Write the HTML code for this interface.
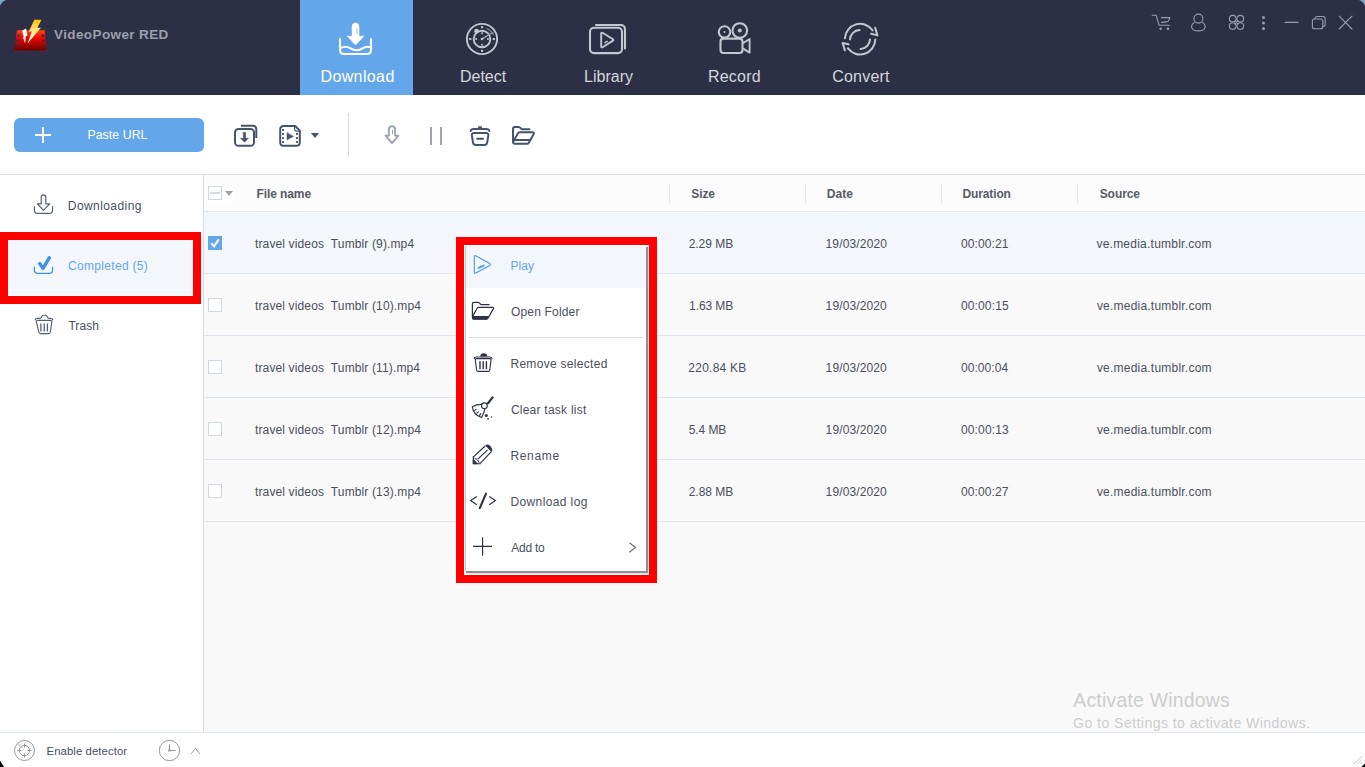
<!DOCTYPE html>
<html>
<head>
<meta charset="utf-8">
<title>VideoPower RED</title>
<style>
*{box-sizing:border-box;margin:0;padding:0}
html,body{width:1365px;height:767px;overflow:hidden;background:#fff;font-family:"Liberation Sans",sans-serif;}
.abs{position:absolute}
#app{position:absolute;left:0;top:0;width:1365px;height:767px;overflow:hidden;background:#fff}
#hdr{position:absolute;left:0;top:0;width:1365px;height:95px;background:#2d3045}
.tab{position:absolute;top:0;width:113px;height:95px;color:#d3d6dc;font-size:16.5px;text-align:center}
.tab .lbl{position:absolute;left:0;width:113px;top:66px;line-height:20px;white-space:nowrap}
.tab.on{background:#63a7ea;color:#fff}
#title{position:absolute;left:54px;top:26px;font-size:14px;font-weight:bold;color:#c6c7cc;line-height:18px;white-space:nowrap}
#tool{position:absolute;left:0;top:95px;width:1365px;height:80px;background:#fff;border-bottom:1px solid #d9e0e8}
#paste{position:absolute;left:14px;top:23px;width:190px;height:34px;background:#63a7ea;border-radius:6px;color:#fff;font-size:13px}
#side{position:absolute;left:0;top:175px;width:204px;height:557px;background:#fff;border-right:1px solid #d5dde6}
.sitem{position:absolute;left:0;width:203px;height:60px;font-size:12.5px;color:#46505f}
.sitem span{position:absolute;left:68px;top:22px;line-height:16px;white-space:nowrap}
#main{position:absolute;left:204px;top:175px;width:1161px;height:557px;background:#f9f9fa}
#thead{position:absolute;left:0;top:0;width:1161px;height:37px;background:#fcfcfc;border-bottom:1px solid #e0e6ed;font-size:12px;font-weight:bold;color:#474c58}
#thead span{position:absolute;top:11px;line-height:15px;white-space:nowrap}
#thead i{position:absolute;top:9px;width:1px;height:19px;background:#e3e6ea}
.row{position:absolute;left:0;width:1161px;height:62px;border-bottom:1px solid #e0e6ed;font-size:12px;color:#4a4f5c;background:#f9f9fa}
.row.sel{background:#f3f6fa}
.row span{position:absolute;top:24px;line-height:15px;white-space:pre}
.cb{position:absolute;left:4px;top:24px;width:14px;height:14px;border:1px solid #cfd7e2;background:#fff}
.cb.on{background:#63a7ea;border-color:#63a7ea}
#foot{position:absolute;left:0;top:732px;width:1365px;height:35px;background:#fff;border-top:1px solid #dfe5ec;font-size:12px;color:#46505f}
#menu{position:absolute;left:464px;top:245px;width:182px;height:326px;background:#fff;box-shadow:2px 2px 0 #8f8f8f,3px 3px 0 #d9e6e6;font-size:12px;color:#4a4f5c}
#menu .lb{position:absolute;left:1px;top:1px;width:1px;height:325px;background:#c9c9c9}
.mi{position:absolute;left:2px;width:180px;height:46px}
.mi span{position:absolute;left:45px;top:15px;line-height:16px;white-space:nowrap}
.red{position:absolute;border:8px solid #fe0000}
#tx span{position:absolute;white-space:pre;line-height:1}
</style>
</head>
<body>
<div id="app">
<div id="hdr">
    <div class="tab on" style="left:300px"></div>
  <div class="tab" style="left:426px"></div>
  <div class="tab" style="left:552px"></div>
  <div class="tab" style="left:678px"></div>
  <div class="tab" style="left:804px"></div>
</div>
<svg id="ico" width="1365" height="767" viewBox="0 0 1365 767" style="position:absolute;left:0;top:0;pointer-events:none" fill="none" stroke-linecap="round" stroke-linejoin="round">
<defs>
<linearGradient id="gRed" x1="0" y1="0" x2="0" y2="1"><stop offset="0" stop-color="#ff4a1a"/><stop offset=".35" stop-color="#f00800"/><stop offset="1" stop-color="#6e0000"/></linearGradient>
<linearGradient id="gBolt" x1="0" y1="0" x2="0" y2="1"><stop offset="0" stop-color="#ffc400"/><stop offset=".45" stop-color="#ffe680"/><stop offset="1" stop-color="#ffffff"/></linearGradient>
</defs>
<g stroke="none">
<path d="M16.9 30.2 L44.7 30.2 L46.9 50.4 L14.3 50.4 Z" fill="url(#gRed)"/>
<g fill="#2d3045"><rect x="17.2" y="34.6" width="2.6" height="2.1" rx=".7"/><rect x="16.7" y="39.5" width="2.6" height="2.1" rx=".7"/><rect x="16.2" y="44.4" width="2.6" height="2.1" rx=".7"/><rect x="41.8" y="34.6" width="2.6" height="2.1" rx=".7"/><rect x="42.3" y="39.5" width="2.6" height="2.1" rx=".7"/><rect x="42.8" y="44.4" width="2.6" height="2.1" rx=".7"/>
<path d="M14 32.6 h2.6 v1.3 h-2.6z M14 37.6 h2.4 v1.3 h-2.4z M13.8 42.6 h2 v1.3 h-2z M13.6 47.4 h1.6 v1.2 h-1.6z M45.2 32.6 h2.6 v1.3 h-2.6z M45.6 37.6 h2.4 v1.3 h-2.4z M46 42.6 h2 v1.3 h-2z M46.4 47.4 h1.6 v1.2 h-1.6z"/></g>
<path d="M16.6 29.2 h1.4 v1.4 h-1.4z M43.6 29.2 h1.4 v1.4 h-1.4z M14.2 50 h2.4 v1 h-2.4z M44.6 50 h2.4 v1 h-2.4z" fill="#a01008"/>
<path d="M34.3 19.8 L41.5 19.8 L37.3 27.7 L41 27.7 L27.7 43.2 L31.8 31.4 L28.9 31.4 Z" fill="url(#gBolt)"/>
<path d="M26 28.4 L22.1 30.8 L23.8 36.9 L22.9 37.3 L25.2 43.6 L25.7 36.5 L27.5 35.5 Z" fill="#fff"/>
</g>
<g stroke="#fff" stroke-width="2.1">
<path d="M340 39 V50 Q340 54 344 54 H367 Q371 54 371 50 V39"/>
<path d="M340.5 48.3 C344 46 347.5 46.6 350.5 48.4 S358 51.2 362 48.6 S368 46 371 47.6" stroke-width="1.9"/>
</g>
<path d="M352 26.4 A3.5 3.5 0 0 1 359 26.4 V36.2 H364 L355.5 45 L347.2 36.2 H352 Z" fill="#fff" stroke="#fff" stroke-width=".6"/>
<rect x="356.1" y="28.2" width="1.8" height="5.6" fill="#c3dcf6"/>
<g stroke="#c3c7cf" stroke-width="1.9">
<circle cx="482" cy="39" r="15.1"/><circle cx="482" cy="39" r="8.3"/>
<path d="M482.6 38.6 L488.5 35" stroke="#a9aebb" stroke-width="1.3"/>
<path d="M487 28.5 Q491.5 30.5 493.2 34.5" stroke="#7d8392" stroke-width="1.3"/>
<path d="M488.6 35 L493 32.6" stroke="#8b91a0" stroke-width="1.4"/>
</g>
<g fill="#c3c7cf"><rect x="481" y="26.2" width="2.1" height="2.1"/><rect x="481" y="49.8" width="2.1" height="2.1"/><rect x="469.2" y="38" width="2.1" height="2.1"/><rect x="492.8" y="38" width="2.1" height="2.1"/>
<rect x="481.2" y="32.4" width="1.7" height="1.8"/><rect x="481.2" y="43.9" width="1.7" height="1.8"/><rect x="475.3" y="38.2" width="1.8" height="1.7"/><rect x="487" y="38.2" width="1.8" height="1.7"/>
<circle cx="482" cy="39" r="1.3"/><circle cx="476.6" cy="31.2" r="2.4"/></g>
<g stroke="#c3c7cf" stroke-width="2.1">
<rect x="590" y="27.8" width="32" height="25.3" rx="4"/>
<path d="M596 25 H620.5 Q625 25 625 29.5 V48.5"/>
<path d="M601.2 33.6 V46.6 Q601.4 47.8 602.6 47.2 L613 40.6 Q613.8 40 613 39.3 L602.6 32.8 Q601.3 32.4 601.2 33.6 Z" stroke-width="1.9"/>
<path d="M605 42.6 L607.2 41.4" stroke-width="1.5"/>
</g>
<g stroke="#c3c7cf" stroke-width="2.1">
<circle cx="724.5" cy="31.9" r="5.7"/><circle cx="739.8" cy="30.5" r="7.3"/>
<rect x="720.5" y="38.6" width="22" height="14.4" rx="3"/>
<path d="M743.6 42.8 L749.6 39 V52.6 L743.6 48.9" stroke-width="1.9"/>
</g>
<g fill="#c3c7cf"><circle cx="724.5" cy="31.9" r="1"/><circle cx="739.8" cy="30.5" r="2"/></g>
<g stroke="#c3c7cf" stroke-width="2">
<path d="M844.9 38.2 A15.2 15.2 0 0 1 872.6 30.4"/>
<path d="M871.2 33.8 L877.4 35.4 L875.2 27.8"/>
<path d="M875.3 39.6 A15.2 15.2 0 0 1 847.8 48.2"/>
<path d="M848.6 44.2 L842.6 43 L844.9 50.4"/>
<path d="M850 39.4 A10 10 0 0 1 859.6 30"/>
<path d="M870 39.4 A10 10 0 0 1 860.6 49"/>
</g>
<g stroke="#9a9daa" stroke-width="1.1">
<path d="M1152.2 15.3 H1156.2 L1159 25.2 H1169.4"/>
<path d="M1161.4 17.6 H1169.6 Q1170 17.7 1169.6 18.6 L1168.4 21 Q1168 21.8 1166.8 21.9 L1161.6 22.4"/>
<circle cx="1198.4" cy="18.6" r="4.5"/>
<path d="M1194.2 22.6 C1190 25.6 1190.6 30.9 1198.4 30.9 S1206.8 25.6 1202.6 22.6"/>
<circle cx="1232.7" cy="18.7" r="3.3"/><circle cx="1240.3" cy="18.7" r="3.3"/><circle cx="1232.7" cy="26.1" r="3.3"/><circle cx="1240.3" cy="26.1" r="3.3"/>
<path d="M1234.9 20.9 L1238.1 23.9 M1238.1 20.9 L1234.9 23.9"/>
<path d="M1285 22.4 H1298"/>
<rect x="1312.4" y="19" width="10.4" height="9.8" rx="2"/>
<path d="M1314.8 18.6 Q1315 16.5 1317 16.5 H1323 Q1325.2 16.5 1325.2 18.6 V24.2 Q1325.2 26.4 1323.2 26.4"/>
<path d="M1339.2 16.2 L1352 29 M1352 16.2 L1339.2 29"/>
</g>
<g fill="#9a9daa"><circle cx="1160.6" cy="28.8" r="1.3"/><circle cx="1167.9" cy="28.8" r="1.3"/><circle cx="1263.5" cy="17.5" r="1.5"/><circle cx="1263.5" cy="23" r="1.5"/><circle cx="1263.5" cy="28.5" r="1.5"/></g>
</svg>

<div id="tool">
  <div id="paste"></div>
</div>
<div id="side">
  <div class="sitem" style="top:0"></div>
  <div class="sitem" style="top:60px;background:#f3f6fa;color:#63a7ea"></div>
  <div class="sitem" style="top:120px"></div>
</div>
<div id="main">
  <div id="thead">
    <div class="abs" style="left:2px;top:10px;width:28px;height:16px;background:#fff"></div>
    <div class="cb" style="top:11px"><div class="abs" style="left:1px;top:5px;width:10px;height:2px;background:#d3dae4"></div></div>
    <div class="abs" style="left:21px;top:16px;width:0;height:0;border-left:4px solid transparent;border-right:4px solid transparent;border-top:5px solid #9a9fa8"></div>
    <i style="left:465px"></i>
    <i style="left:601px"></i>
    <i style="left:737px"></i>
    <i style="left:873px"></i>
    
  </div>
  <div class="row sel" style="top:37px"><div class="cb on"><svg class="abs" style="left:-1px;top:-1px" width="14" height="14" viewBox="0 0 14 14"><path d="M3.2 7.2 L6 10.4 L10.8 3.4" fill="none" stroke="#fff" stroke-width="2"/></svg></div></div>
  <div class="row" style="top:99px"><div class="cb"></div></div>
  <div class="row" style="top:161px"><div class="cb"></div></div>
  <div class="row" style="top:223px"><div class="cb"></div></div>
  <div class="row" style="top:285px"><div class="cb"></div></div>
</div>
<div id="foot"></div>
<svg id="ico2" width="1365" height="767" viewBox="0 0 1365 767" style="position:absolute;left:0;top:0;pointer-events:none" fill="none" stroke-linecap="round" stroke-linejoin="round">
<path d="M35 135 H51 M43 127 V143" stroke="#fff" stroke-width="2" stroke-linecap="butt"/>
<g stroke="#43546b" stroke-width="2">
<rect x="235" y="129" width="19" height="16.8" rx="3.6"/>
<path d="M241 125.8 H252.8 Q256.3 125.8 256.3 129.4 V138" stroke-linecap="butt"/>
</g>
<path d="M243.3 132.4 H245.7 V138.2 H248.6 L244.5 142.2 L240.5 138.2 H243.3 Z" fill="#43546b" stroke="#43546b" stroke-width=".5"/>
<g stroke="#43546b" stroke-width="2">
<path d="M283.8 126 H295.2 L299.8 130.6 V142.2 Q299.8 145.8 296.2 145.8 H283.8 Q280.2 145.8 280.2 142.2 V129.6 Q280.2 126 283.8 126 Z"/>
<path d="M294.6 126.6 V129.4 Q294.8 131.2 296.6 131.2 H299.2" stroke-width="1.2"/>
</g>
<g fill="#43546b"><rect x="282.1" y="129" width="1.9" height="1.9"/><rect x="282.1" y="133" width="1.9" height="1.9"/><rect x="282.1" y="137.1" width="1.9" height="1.9"/><rect x="282.1" y="141.1" width="1.9" height="1.9"/>
<rect x="296" y="133" width="1.9" height="1.9"/><rect x="296" y="137.1" width="1.9" height="1.9"/><rect x="296" y="141.1" width="1.9" height="1.9"/>
<path d="M287 133 V139.8 L293.2 136.4 Z" stroke="#43546b" stroke-width=".6"/>
<path d="M310.9 133 H319 L315 137.9 Z"/></g>
<rect x="348" y="113" width="1" height="44" fill="#d3dbe5"/>
<g stroke="#9ba4b1" stroke-width="1.9">
<path d="M388.9 135.6 V129.4 A3.1 3.1 0 0 1 395.1 129.4 V135.6 H398.4 L392 143.2 L385.6 135.6 Z"/>
<path d="M392.5 130.2 V134" stroke-width="1"/>
</g>
<g fill="#9ba4b1"><rect x="430" y="127" width="2" height="18"/><rect x="440" y="127" width="2" height="18"/></g>
<g stroke="#43546b" stroke-width="2">
<path d="M470.6 131 Q471.2 128.9 473.6 128.9 H486.4 Q488.8 128.9 489.4 131"/>
<path d="M479.2 127.4 H480.8" stroke-width="2.4"/>
<path d="M474 133 H486.2 Q488.6 133 488.3 135.4 L487.2 142.6 Q486.8 144.9 484.4 144.9 H475.8 Q473.4 144.9 473 142.6 L471.9 135.4 Q471.6 133 474 133 Z"/>
<path d="M477.2 138.8 H483"/>
</g>
<g stroke="#43546b" stroke-width="2">
<path d="M529.4 129.2 H522.4 Q521.4 129.2 520.6 128.2 Q519.6 127 518.4 127 H515 Q513 127 513 129 V141.8 Q513 143.8 515 143.8 H526.6 Q528.2 143.8 529 142.4 L533.6 134.2 Q534.6 132.2 532.4 132.2 H519.6 Q518.4 132.2 517.8 133.4 L513.4 141.6"/>
<path d="M514.4 140 H530" stroke-width="1.8"/>
</g>
<g stroke="#506076" stroke-width="1.15">
<path d="M41.2 203.8 V197.2 A2.3 2.3 0 0 1 45.8 197.2 V203.8 H49.6 L43.5 210.4 L37.4 203.8 Z"/>
<path d="M34.4 206.6 V210 Q34.4 213.4 37.8 213.4 H49.2 Q52.6 213.4 52.6 210 V206.6"/>
</g>
<path d="M39.7 263.6 L43 268.4 L49.4 257.7" stroke="#3c92ea" stroke-width="3.4"/>
<path d="M34.4 267 V270 Q34.4 273.4 37.8 273.4 H49.2 Q52.6 273.4 52.6 270 V267" stroke="#3c92ea" stroke-width="1.25"/>
<g stroke="#506076" stroke-width="1.1">
<path d="M35.2 320 Q35.6 318.4 37.4 318.4 H40 Q40.8 318.4 41.2 317.6 L42 316 Q42.4 315.2 43.4 315.2 H45.4 Q46.4 315.2 46.8 316 L47.6 317.6 Q48 318.4 48.8 318.4 H50.6 Q52.4 318.4 52.8 320"/>
<path d="M37.8 320.4 H50.4 Q52 320.4 51.8 322 L50.4 332 Q50.2 333.6 48.6 333.6 H40.6 Q39 333.6 38.8 332 L36.4 322 Q36.2 320.4 37.8 320.4 Z"/>
<path d="M40.9 323.4 V331.4 M44.2 323.4 V331.4 M47.4 323.4 V331.4" stroke-width="1.3" stroke-linecap="butt"/>
</g>
<g stroke="#999" stroke-width="1">
<circle cx="24.5" cy="750.5" r="10"/><circle cx="24.5" cy="750.5" r="5.2"/>
<path d="M24.5 743.4 V747.6 M24.5 753.4 V757.6 M17.4 750.5 H21.6 M27.4 750.5 H31.6" stroke-linecap="butt"/>
<circle cx="169.5" cy="750.5" r="10.2"/>
<path d="M169.5 744.2 V750.5 H175.8" stroke-linecap="butt" stroke-width="1.1"/>
<path d="M191.2 753.8 L195.5 748.4 L199.8 753.8" stroke-linecap="butt" stroke-linejoin="miter"/>
</g>
<circle cx="169.4" cy="750.5" r="1.3" fill="#999"/>
<path d="M24.5 750.5 L16.4 744.6 A10 10 0 0 1 19.2 742 Z" fill="#bdbdbd" opacity=".55"/>
<g stroke="#c9d3e0" stroke-width="1" stroke-linecap="butt"><path d="M1354 764 L1362 756 M1357 764 L1362 759 M1360 764 L1362 762"/></g>
<path d="M0 0 H6 Q1.5 1.5 0 6 Z" fill="#7fa9c0"/>
<path d="M1365 0 H1359 Q1363.5 1.5 1365 6 Z" fill="#7fa9c0"/>
<path d="M0 767 V760.6 L4 767 Z" fill="#000"/>
<path d="M1365 767 V763.4 L1361.4 767 Z" fill="#000"/>
</svg>

<div id="menu">
  <div class="lb"></div>
  <div class="mi" style="top:1px;height:42px;background:#f3f6fa;color:#63a7ea"></div>
  <div class="mi" style="top:43px"></div>
  <div class="abs" style="left:5px;top:92px;width:174px;height:1px;background:#d3dbe5"></div>
  <div class="mi" style="top:95px"></div>
  <div class="mi" style="top:141px"></div>
  <div class="mi" style="top:187px"></div>
  <div class="mi" style="top:233px"></div>
  <div class="mi" style="top:279px"></div>
</div>
<div id="tx">
<span id="t0" style="left:54.05px;top:28.04px;font-size:13.5px;font-weight:bold;letter-spacing:0.387px;color:#9b9fa9">VideoPower RED</span>
<span id="t1" style="left:320.48px;top:68.69px;font-size:16px;letter-spacing:0.380px;color:#ffffff">Download</span>
<span id="t2" style="left:460.10px;top:68.69px;font-size:16px;letter-spacing:-0.046px;color:#d3d6dc">Detect</span>
<span id="t3" style="left:584.10px;top:68.69px;font-size:16px;letter-spacing:0.009px;color:#d3d6dc">Library</span>
<span id="t4" style="left:708.04px;top:68.69px;font-size:16px;letter-spacing:0.188px;color:#d3d6dc">Record</span>
<span id="t5" style="left:832.20px;top:68.69px;font-size:16px;letter-spacing:0.226px;color:#d3d6dc">Convert</span>
<span id="t6" style="left:87.43px;top:129.28px;font-size:12.3px;letter-spacing:0.066px;color:#ffffff">Paste URL</span>
<span id="t7" style="left:67.82px;top:200.42px;font-size:12px;letter-spacing:0.420px;color:#46505f">Downloading</span>
<span id="t8" style="left:67.98px;top:260.42px;font-size:12px;letter-spacing:0.322px;color:#63a7ea">Completed (5)</span>
<span id="t9" style="left:68.38px;top:320.42px;font-size:12px;letter-spacing:0.093px;color:#46505f">Trash</span>
<span id="t10" style="left:256.50px;top:188.16px;font-size:12px;font-weight:bold;letter-spacing:-0.097px;color:#565b66">File name</span>
<span id="t11" style="left:691.30px;top:188.16px;font-size:12px;font-weight:bold;letter-spacing:-0.097px;color:#565b66">Size</span>
<span id="t12" style="left:826.68px;top:188.16px;font-size:12px;font-weight:bold;letter-spacing:0.100px;color:#565b66">Date</span>
<span id="t13" style="left:962.50px;top:188.16px;font-size:12px;font-weight:bold;letter-spacing:-0.132px;color:#565b66">Duration</span>
<span id="t14" style="left:1099.68px;top:188.16px;font-size:12px;font-weight:bold;letter-spacing:-0.064px;color:#565b66">Source</span>
<span id="t15" style="left:255.02px;top:238.42px;font-size:12px;letter-spacing:0.132px;color:#4a4f5c">travel videos  Tumblr (9).mp4</span>
<span id="t16" style="left:688.66px;top:238.42px;font-size:12px;letter-spacing:-0.029px;color:#4a4f5c">2.29 MB</span>
<span id="t17" style="left:825.55px;top:238.42px;font-size:12px;letter-spacing:0.149px;color:#4a4f5c">19/03/2020</span>
<span id="t18" style="left:960.95px;top:238.42px;font-size:12px;letter-spacing:0.120px;color:#4a4f5c">00:00:21</span>
<span id="t19" style="left:1096.41px;top:238.42px;font-size:12px;letter-spacing:0.238px;color:#4a4f5c">ve.media.tumblr.com</span>
<span id="t20" style="left:255.02px;top:300.42px;font-size:12px;letter-spacing:0.132px;color:#4a4f5c">travel videos  Tumblr (10).mp4</span>
<span id="t21" style="left:689.12px;top:300.42px;font-size:12px;letter-spacing:-0.099px;color:#4a4f5c">1.63 MB</span>
<span id="t22" style="left:825.58px;top:300.42px;font-size:12px;letter-spacing:0.126px;color:#4a4f5c">19/03/2020</span>
<span id="t23" style="left:960.90px;top:300.42px;font-size:12px;letter-spacing:0.148px;color:#4a4f5c">00:00:15</span>
<span id="t24" style="left:1096.88px;top:300.42px;font-size:12px;letter-spacing:0.219px;color:#4a4f5c">ve.media.tumblr.com</span>
<span id="t25" style="left:255.02px;top:362.42px;font-size:12px;letter-spacing:0.132px;color:#4a4f5c">travel videos  Tumblr (11).mp4</span>
<span id="t26" style="left:688.32px;top:362.42px;font-size:12px;letter-spacing:0.247px;color:#4a4f5c">220.84 KB</span>
<span id="t27" style="left:825.58px;top:362.42px;font-size:12px;letter-spacing:0.126px;color:#4a4f5c">19/03/2020</span>
<span id="t28" style="left:960.90px;top:362.42px;font-size:12px;letter-spacing:0.078px;color:#4a4f5c">00:00:04</span>
<span id="t29" style="left:1096.88px;top:362.42px;font-size:12px;letter-spacing:0.219px;color:#4a4f5c">ve.media.tumblr.com</span>
<span id="t30" style="left:255.02px;top:424.42px;font-size:12px;letter-spacing:0.132px;color:#4a4f5c">travel videos  Tumblr (12).mp4</span>
<span id="t31" style="left:688.70px;top:424.42px;font-size:12px;letter-spacing:-0.067px;color:#4a4f5c">5.4 MB</span>
<span id="t32" style="left:825.58px;top:424.42px;font-size:12px;letter-spacing:0.126px;color:#4a4f5c">19/03/2020</span>
<span id="t33" style="left:960.90px;top:424.42px;font-size:12px;letter-spacing:0.167px;color:#4a4f5c">00:00:13</span>
<span id="t34" style="left:1096.88px;top:424.42px;font-size:12px;letter-spacing:0.219px;color:#4a4f5c">ve.media.tumblr.com</span>
<span id="t35" style="left:255.02px;top:486.42px;font-size:12px;letter-spacing:0.132px;color:#4a4f5c">travel videos  Tumblr (13).mp4</span>
<span id="t36" style="left:688.70px;top:486.42px;font-size:12px;letter-spacing:-0.030px;color:#4a4f5c">2.88 MB</span>
<span id="t37" style="left:825.58px;top:486.42px;font-size:12px;letter-spacing:0.126px;color:#4a4f5c">19/03/2020</span>
<span id="t38" style="left:960.90px;top:486.42px;font-size:12px;letter-spacing:0.111px;color:#4a4f5c">00:00:27</span>
<span id="t39" style="left:1096.88px;top:486.42px;font-size:12px;letter-spacing:0.219px;color:#4a4f5c">ve.media.tumblr.com</span>
<span id="t40" style="left:510.42px;top:260.42px;font-size:12px;letter-spacing:0.119px;color:#63a7ea">Play</span>
<span id="t41" style="left:510.99px;top:306.42px;font-size:12px;letter-spacing:0.172px;color:#4a4f5c">Open Folder</span>
<span id="t42" style="left:510.41px;top:358.42px;font-size:12px;letter-spacing:0.304px;color:#4a4f5c">Remove selected</span>
<span id="t43" style="left:510.89px;top:404.42px;font-size:12px;letter-spacing:0.241px;color:#4a4f5c">Clear task list</span>
<span id="t44" style="left:510.41px;top:450.42px;font-size:12px;letter-spacing:0.674px;color:#4a4f5c">Rename</span>
<span id="t45" style="left:510.41px;top:496.32px;font-size:12px;letter-spacing:0.388px;color:#4a4f5c">Download log</span>
<span id="t46" style="left:511.33px;top:542.22px;font-size:12px;letter-spacing:-0.257px;color:#4a4f5c">Add to</span>
<span id="t47" style="left:46.51px;top:746.41px;font-size:11.3px;letter-spacing:0.104px;color:#46505f">Enable detector</span>
<span id="t48" style="left:1073.24px;top:691.12px;font-size:19.4px;letter-spacing:0.236px;color:#cdcdcd">Activate Windows</span>
<span id="t49" style="left:1073.11px;top:716.18px;font-size:14.1px;letter-spacing:0.427px;color:#cdcdcd">Go to Settings to activate Windows.</span>
</div>
<svg id="ico3" width="1365" height="767" viewBox="0 0 1365 767" style="position:absolute;left:0;top:0;pointer-events:none" fill="none" stroke-linecap="round" stroke-linejoin="round">
<g stroke="#4b9bec">
<path d="M474.3 256.8 V272.2 Q474.4 273.8 475.8 273 L489.8 265.4 Q491 264.5 489.8 263.6 L475.8 255.8 Q474.4 255.2 474.3 256.8 Z" stroke-width="1.15"/>
<path d="M478.6 267.9 L483.6 265.6" stroke-width="2"/>
</g>
<g stroke="#2a3045" stroke-width="1.2">
<path d="M489.2 304.6 H481.4 Q480.6 304.6 480 303.6 Q479.2 302.3 478.2 302.3 H473.8 Q472.4 302.3 472.4 303.8 V317.6 Q472.4 319.2 473.8 319.2 H486.4 Q487.4 319.2 488 318.2 L493.4 308.6 Q494 307.4 492.6 307.4 H478.6 Q477.6 307.4 477.2 308.2 L472.6 316.4"/>
</g>
<path d="M472.4 316 H489 L487.6 318.6 Q487.2 319.6 486.2 319.6 H474 Q472.4 319.6 472.4 318 Z" fill="#2a3045"/>
<g stroke="#2a3045" stroke-width="1.1">
<path d="M474.2 358.6 Q474.6 357 476.4 357 H489.8 Q491.6 357 492 358.6"/>
<path d="M476.6 358.6 H489.8 Q491.2 358.6 491 360 L489.8 370 Q489.6 371.4 488.2 371.4 H478.2 Q476.8 371.4 476.6 370 L475.3 360 Q475.2 358.6 476.6 358.6 Z"/>
<path d="M480 361.2 V369.2 M483.2 361.2 V369.2 M486.4 361.2 V369.2" stroke-width="1.4" stroke-linecap="butt"/>
</g>
<path d="M480.2 356.4 Q480.4 353.2 483.7 353.2 Q487 353.2 487.3 356.4 Z" fill="#2a3045"/>
<g stroke="#2a3045" stroke-width="1.1">
<path d="M492.6 397.4 L488.2 403" stroke-width="2.2"/>
<path d="M488.2 403 L486.6 404"/>
<circle cx="484.4" cy="405.8" r="2.9"/>
<path d="M481.8 404.4 Q476 404.4 472.3 406.8 Q473.4 414.6 481.6 417.6 Q483.6 414 485 408.6"/>
<path d="M474.6 410.4 L476.2 409.4 M476.8 413.2 L478.4 411.8 M479.6 415.4 L480.8 413.6"/>
</g>
<g fill="#2a3045"><circle cx="486.3" cy="415.6" r="1.5"/><circle cx="488" cy="418.8" r=".9"/><circle cx="491.6" cy="417" r=".7"/></g>
<g stroke="#2a3045" stroke-width="1.15">
<path d="M473.4 456.8 L485.2 446 M480.2 463.4 L491.4 451.6 M477.8 459.2 L487.6 449.8" stroke-linecap="butt"/>
<path d="M473.3 456.6 V463.7 H480.4"/>
<path d="M474.8 458.2 Q478 459 479.2 462.4" stroke-width="1"/>
</g>
<path d="M486.4 445 Q488.4 444.2 490.2 446.2 Q492.6 448.8 491.9 450.9 L491.2 451.4 L485.8 445.6 Z" fill="#2a3045" stroke="#2a3045" stroke-width=".6"/>
<path d="M473.3 459.8 L473.3 463.7 L477.4 463.7 Z" fill="#2a3045" stroke="#2a3045" stroke-width=".8"/>
<g stroke="#2a3045" stroke-width="1.2" stroke-linecap="butt" stroke-linejoin="miter">
<path d="M476.8 496.4 L470.6 500.6 L476.8 504.8"/>
<path d="M489.2 496.4 L495.4 500.6 L489.2 504.8"/>
<path d="M486 493.6 L479.8 508.2" stroke-width="2.1" stroke-linecap="round"/>
</g>
<path d="M473 546.4 H492 M482.6 537.2 V555.8" stroke="#2a3045" stroke-width="1.15" stroke-linecap="butt"/>
<path d="M629.4 542.8 L635.4 547.5 L629.4 552.2" stroke="#6b707c" stroke-width="1.3" stroke-linecap="butt" stroke-linejoin="miter"/>
</svg>

<div class="red" style="left:0;top:232px;width:201px;height:72px"></div>
<div class="red" style="left:456px;top:237px;width:201px;height:346px"></div>
</div>
</body>
</html>
